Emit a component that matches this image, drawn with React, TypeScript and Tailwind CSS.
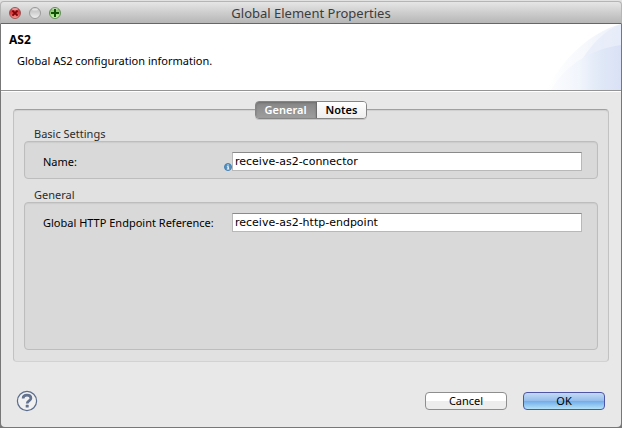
import { useState } from "react";
import type { ReactNode } from "react";

function TrafficLights() {
  return (
    <div className="flex gap-2">
      <button aria-label="Close" className="size-3">
        <svg viewBox="0 0 12 12" className="size-3">
          <defs>
            <linearGradient id="red" x1="0" y1="0" x2="0" y2="1">
              <stop offset="0" stopColor="#c4575a" />
              <stop offset="0.5" stopColor="#dd3d3f" />
              <stop offset="1" stopColor="#f8a69e" />
            </linearGradient>
          </defs>
          <circle cx="6" cy="6" r="5.5" fill="url(#red)" stroke="#8c4545" strokeWidth="0.8" />
          <ellipse cx="6" cy="2.2" rx="3" ry="1.1" fill="#fff" opacity="0.45" />
          <path d="M3.4 3.6 8.6 8.6M8.6 3.6 3.4 8.6" stroke="#7d0508" strokeWidth="1.9" />
        </svg>
      </button>
      <button aria-label="Minimize" className="size-3" disabled>
        <svg viewBox="0 0 12 12" className="size-3">
          <defs>
            <linearGradient id="gray" x1="0" y1="0" x2="0" y2="1">
              <stop offset="0" stopColor="#bcbcbc" />
              <stop offset="0.5" stopColor="#d2d2d2" />
              <stop offset="1" stopColor="#f0f0f0" />
            </linearGradient>
          </defs>
          <circle cx="6" cy="6" r="5.5" fill="url(#gray)" stroke="#8b8b8b" strokeWidth="0.8" />
          <ellipse cx="6" cy="2.4" rx="3" ry="1.2" fill="#fff" opacity="0.5" />
        </svg>
      </button>
      <button aria-label="Zoom" className="size-3">
        <svg viewBox="0 0 12 12" className="size-3">
          <defs>
            <linearGradient id="green" x1="0" y1="0" x2="0" y2="1">
              <stop offset="0" stopColor="#84b272" />
              <stop offset="0.5" stopColor="#95d676" />
              <stop offset="1" stopColor="#d2f7b4" />
            </linearGradient>
          </defs>
          <circle cx="6" cy="6" r="5.5" fill="url(#green)" stroke="#4d7a43" strokeWidth="0.8" />
          <ellipse cx="6" cy="2" rx="3" ry="1" fill="#fff" opacity="0.45" />
          <path d="M6 2v8M2 6h8" stroke="#0f5206" strokeWidth="2" />
        </svg>
      </button>
    </div>
  );
}

function BannerArt() {
  return (
    <svg viewBox="0 0 76 66" className="h-full w-[76px]" aria-hidden="true">
      <defs>
        <linearGradient id="outer" x1="0" y1="0" x2="1" y2="0">
          <stop offset="0" stopColor="#ffffff" />
          <stop offset="0.5" stopColor="#f6f8fc" />
          <stop offset="1" stopColor="#ecf0fa" />
        </linearGradient>
        <linearGradient id="inner" x1="0" y1="0" x2="1" y2="0">
          <stop offset="0" stopColor="#fcfcfe" />
          <stop offset="0.4" stopColor="#f1f5fc" />
          <stop offset="0.72" stopColor="#dfe8f6" />
          <stop offset="1" stopColor="#dae1f6" />
        </linearGradient>
      </defs>
      <path d="M2 66C14 40 42 9 76 0V66Z" fill="url(#outer)" />
      <path d="M38 34C48 19 60 6 76 0V24Z" fill="#e3e9f8" opacity="0.6" />
      <path d="M6 66C18 44 44 25 76 21V66Z" fill="url(#inner)" />
    </svg>
  );
}

function InfoIcon() {
  return (
    <svg viewBox="0 0 8 8" className="size-2" aria-hidden="true">
      <circle cx="4" cy="4" r="3.5" fill="#5590bf" stroke="#4480b4" />
      <path d="M3.4 1.4h1.3v1.1H3.4zM2.9 3.2h1.9v2.6h.6v.8H2.8v-.8h.7V4h-.6z" fill="#fff" />
    </svg>
  );
}

function Group({ title, className, children }: { title: string; className: string; children: ReactNode }) {
  return (
    <section className={`flex flex-col ${className}`}>
      <h2 className="px-2.5 leading-[14px] text-[#2c2c2c]">{title}</h2>
      <div className="flex-1 rounded-[4px] border border-[#bdbdbd] bg-[#d9d9d9] px-[15px] pt-2.5 pb-[7px] shadow-[inset_0_1px_1px_#cbcbcb]">
        {children}
      </div>
    </section>
  );
}

function Field({ id, label, value, info }: { id: string; label: string; value: string; info?: boolean }) {
  const [text, setText] = useState(value);
  return (
    <div className="flex">
      <div className="flex w-[192px] shrink-0 items-end justify-between pl-[3px]">
        <label htmlFor={id} className="leading-[18px] whitespace-nowrap">{label}</label>
        {info && <InfoIcon />}
      </div>
      <input
        id={id}
        value={text}
        onChange={(e) => setText(e.target.value)}
        className="h-[19px] min-w-0 flex-1 border border-[#b8b8b8] border-t-[#8a8a8a] bg-white px-0.5 font-['Lucida_Grande','DejaVu_Sans',sans-serif] outline-none"
      />
    </div>
  );
}

export default function App() {
  const [tab, setTab] = useState("General");
  const selected = "bg-linear-to-b from-[#868686] to-[#9e9e9e] text-white shadow-[inset_0_1px_2px_#707070]";
  const idle = "bg-linear-to-b from-white via-[#f6f6f6] to-[#eeeeee] text-black";
  return (
    <div className="flex min-h-screen flex-col bg-[#777777] pr-px pb-px pl-px font-['Lucida_Grande','Noto_Sans',sans-serif] text-[11px] text-black">
      <div className="flex flex-1 flex-col rounded-b-[4px] bg-[#e8e8e8]">
        <div className="-mx-px bg-[#e2e2e2] pt-px">
          <header className="grid h-[23px] grid-cols-[1fr_auto_1fr] items-center rounded-t-[4px] border-x border-t border-b border-[#b5b5b5] border-b-[#666666] bg-linear-to-b from-[#e6e6e6] to-[#b6b6b6] px-2">
            <TrafficLights />
            <h1 className="text-[13px] leading-4 text-[#3c3c3c]">Global Element Properties</h1>
          </header>
        </div>
        <div className="flex h-[67px] justify-between border-b border-[#949494] bg-white">
          <div className="pt-2 pl-2">
            <p className="text-[12px] leading-4 font-bold">AS2</p>
            <p className="pt-[5px] pl-2 leading-4">Global AS2 configuration information.</p>
          </div>
          <BannerArt />
        </div>
        <main className="flex flex-1 flex-col border-t border-white px-3 pt-[9px]">
          <div className="z-10 -mb-2.5 flex h-[18px] self-center rounded-[4px] border border-[#858585] shadow-[0_1px_0_#c4c4c4]" role="tablist">
            {["General", "Notes"].map((name) => (
              <button
                key={name}
                role="tab"
                aria-selected={tab === name}
                onClick={() => setTab(name)}
                className={`px-[9px] leading-4 font-semibold first:rounded-l-[3px] first:border-r first:border-[#6d6d6d] last:rounded-r-[3px] ${tab === name ? selected : idle}`}
              >
                {name}
              </button>
            ))}
          </div>
          <div className="flex flex-1 flex-col gap-[9px] rounded-[4px] border border-[#c2c2c2] border-t-[#a0a0a0] border-b-[#d2d2d2] bg-[#e1e1e1] px-2.5 pt-[17px] pb-[11px] shadow-[inset_0_1px_1px_#d0d0d0]">
            <Group title="Basic Settings" className="">
              <Field id="name" label="Name:" value="receive-as2-connector" info />
            </Group>
            <Group title="General" className="flex-1">
              <Field id="endpoint" label="Global HTTP Endpoint Reference:" value="receive-as2-http-endpoint" />
            </Group>
          </div>
        </main>
        <footer className="flex items-center justify-between pt-7 pr-4 pb-[15px] pl-[15px]">
          <button aria-label="Help" className="size-[22px]">
            <svg viewBox="0 0 22 22" className="size-[22px]">
              <circle cx="11" cy="11" r="9.6" fill="#f1f1f1" stroke="#5b6d8d" strokeWidth="1.2" />
              <path d="M7.100 8.500C7.100 6 8.800 5.200 11 5.200c2.400 0 3.900 1.100 3.900 3 0 2.800-3.700 2.600-3.700 5.200" fill="none" stroke="#62728f" strokeWidth="2.700" />
              <rect x="9.700" y="14.800" width="3" height="2.700" rx="0.600" fill="#62728f" />
            </svg>
          </button>
          <div className="flex gap-4">
            <button className="h-[18px] w-[82px] rounded-[4px] border border-[#8e8e8e] bg-linear-to-b from-white from-50% to-[#ededed] to-50% leading-4">
              Cancel
            </button>
            <button className="h-[18px] w-[82px] rounded-[4px] border border-[#4c55a8] bg-[linear-gradient(#c4daf4,#93bdec_50%,#6fabe8_50%,#b4e2f8)] leading-4">
              OK
            </button>
          </div>
        </footer>
      </div>
    </div>
  );
}
